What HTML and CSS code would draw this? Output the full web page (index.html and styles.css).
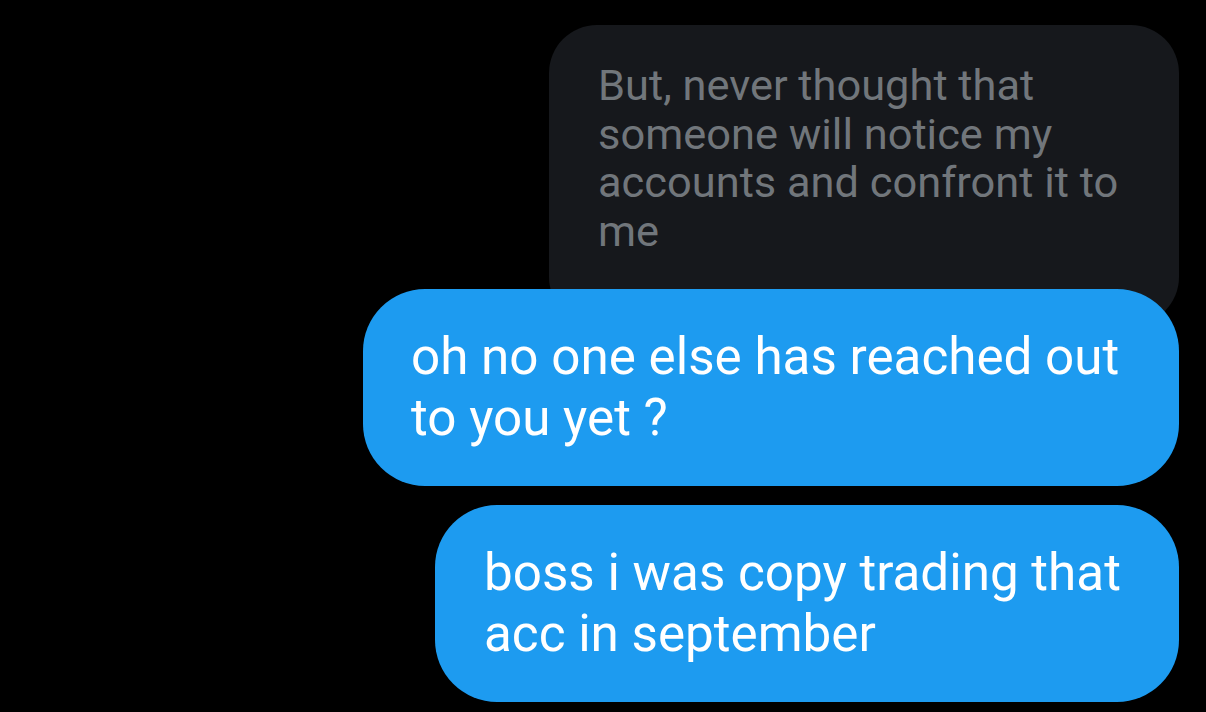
FILE: index.html
```html
<!DOCTYPE html>
<html>
<head>
<meta charset="utf-8">
<link rel="stylesheet" href="styles.css">
</head>
<body>
<div class="thread">
  <div class="bubble received">But, never thought that<br>someone will notice my<br>accounts and confront it to<br>me</div>
  <div class="bubble sent sent-one">oh no one else has reached out<br>to you yet ?</div>
  <div class="bubble sent sent-two">boss i was copy trading that<br>acc in september</div>
</div>
</body>
</html>
```

FILE: styles.css
```css
html, body {
  margin: 0;
  padding: 0;
  background: #000;
}
body {
  width: 1206px;
  height: 712px;
  overflow: hidden;
  font-family: Roboto, "Liberation Sans", sans-serif;
}
.thread {
  display: flex;
  flex-direction: column;
  align-items: flex-end;
  padding: 25px 27px 0 0;
}
.bubble {
  box-sizing: border-box;
  white-space: nowrap;
}
.received {
  width: 630px;
  height: 300px;
  background: #16181c;
  color: #71767b;
  border-radius: 48px;
  font-size: 43.4px;
  line-height: 48.5px;
  padding: 37px 49px;
}
.sent {
  background: #1d9bf0;
  color: #fff;
  border-radius: 62px;
  font-size: 51.2px;
  line-height: 61px;
  height: 197px;
  padding: 37px 48px;
  position: relative;
}
.sent-one {
  width: 816px;
  margin-top: -36px;
}
.sent-two {
  width: 744px;
  margin-top: 19px;
  padding-left: 49px;
}
```
